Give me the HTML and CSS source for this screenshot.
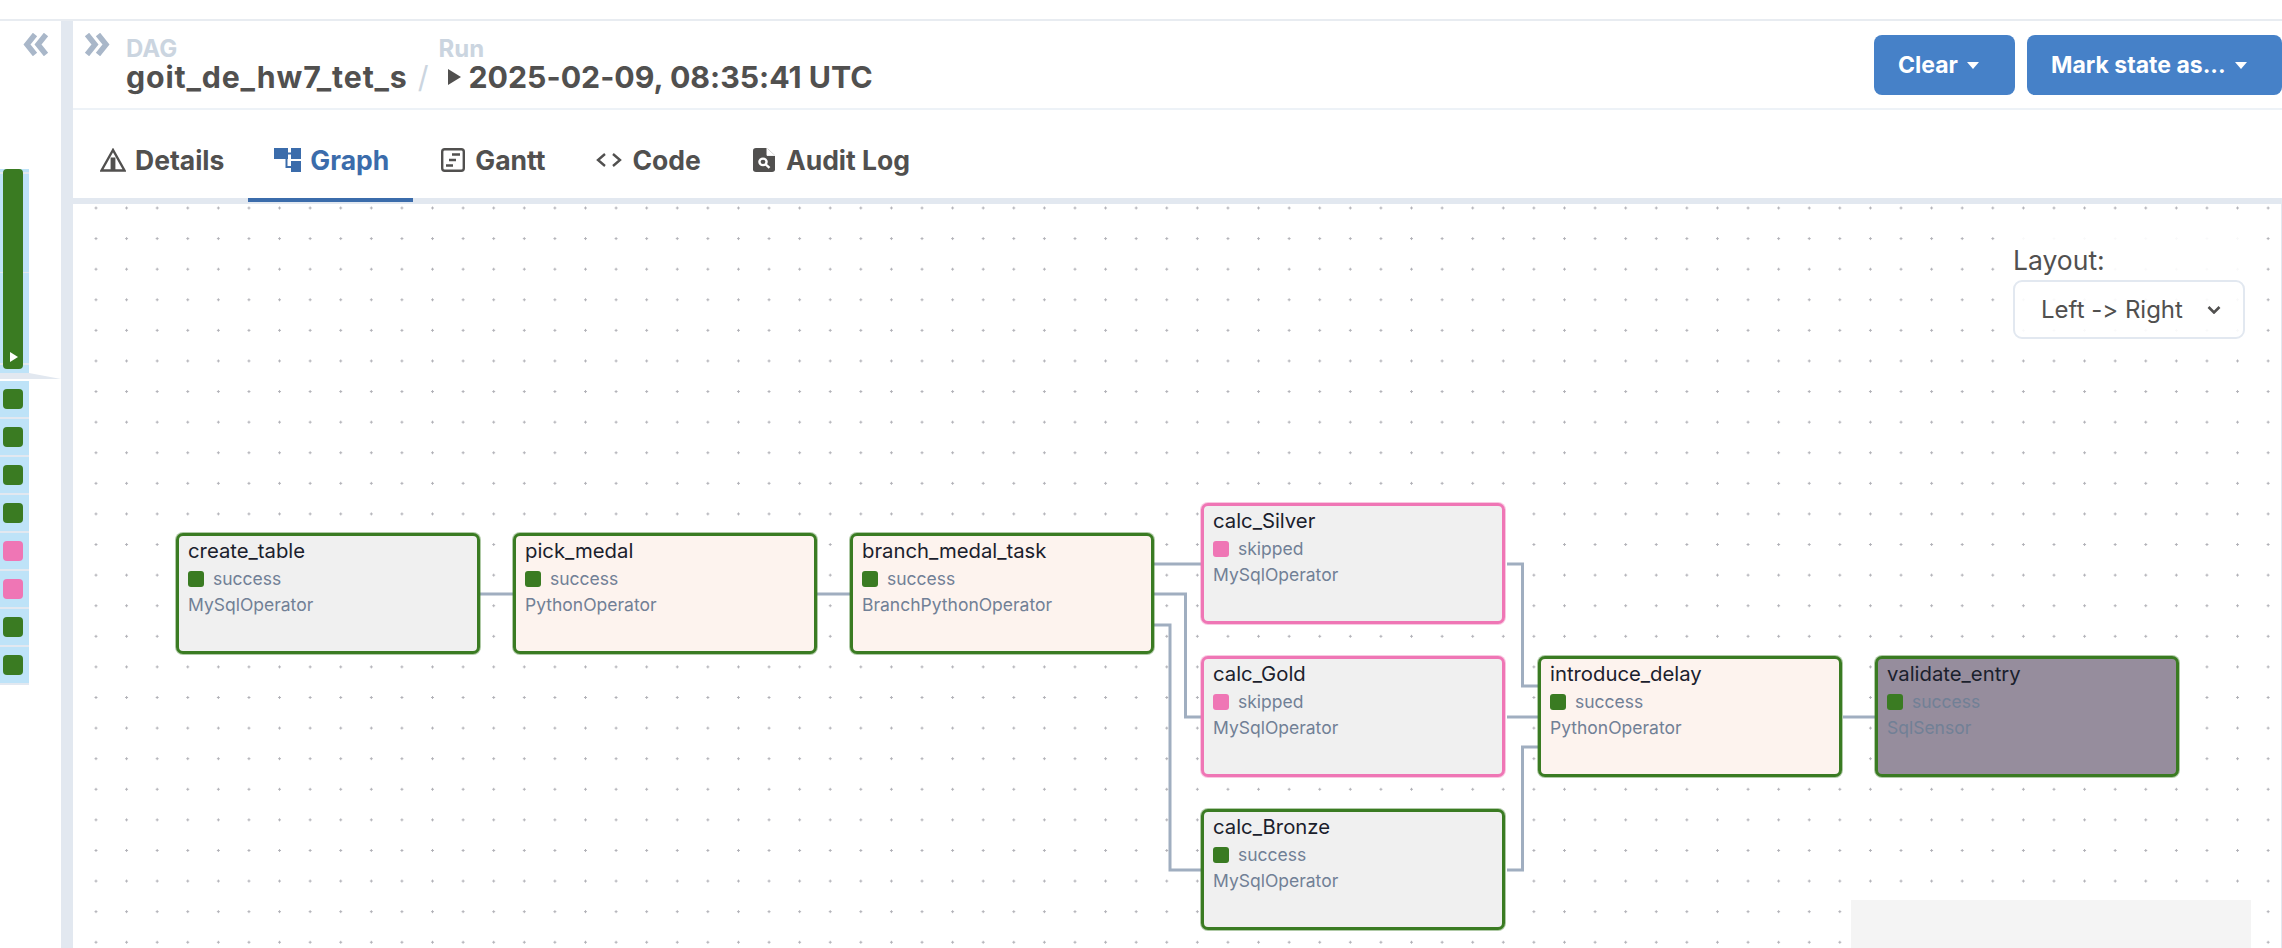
FILE: index.html
```html
<!DOCTYPE html>
<html lang="en">
<head>
    <meta charset="UTF-8">
    <title>goit_de_hw7_tet_s - Graph</title>
    <link rel="stylesheet" href="styles.css">
</head>
<body>
    <div class="topbar"></div>
    <div class="page">
        <aside class="sidebar">
            <svg class="chevrons sidebar-toggle" viewBox="0 0 26 23"><path d="M12 1.5 4 11.5 12 21.5M23 1.5 15 11.5 23 21.5"/></svg>
            <div class="run-col">
                <div class="run-bar">
                    <svg class="play" viewBox="0 0 8 10"><path d="M0 0 8 5 0 10z"/></svg>
                </div>
            </div>
            <div class="run-pointer"></div>
            <div class="cell"><span class="sq success"></span></div>
            <div class="cell"><span class="sq success"></span></div>
            <div class="cell"><span class="sq success"></span></div>
            <div class="cell"><span class="sq success"></span></div>
            <div class="cell"><span class="sq skipped"></span></div>
            <div class="cell"><span class="sq skipped"></span></div>
            <div class="cell"><span class="sq success"></span></div>
            <div class="cell"><span class="sq success"></span></div>
        </aside>
        <main class="content">
            <header class="head">
                <svg class="chevrons head-toggle" viewBox="0 0 26 23"><path d="M3 1.5 11 11.5 3 21.5M14 1.5 22 11.5 14 21.5"/></svg>
                <div class="crumb">
                    <span class="crumb-label">DAG</span>
                    <span class="crumb-value dag-name">goit_de_hw7_tet_s</span>
                </div>
                <span class="crumb-sep">/</span>
                <div class="crumb">
                    <span class="crumb-label">Run</span>
                    <span class="crumb-value"><svg class="run-icon" viewBox="0 0 13 16"><path d="M0 0 13 8 0 16z"/></svg>2025-02-09, 08:35:41 UTC</span>
                </div>
                <div class="actions">
                    <button class="btn btn-clear">Clear<i class="caret"></i></button>
                    <button class="btn btn-mark">Mark state as...<i class="caret"></i></button>
                </div>
            </header>
            <nav class="tabs">
                <a class="tab tab-details">
                    <svg class="tab-icon" viewBox="0 0 26 24"><path class="line" d="M13 2 1.5 22.5h23zM11.8 9.5v13M14.2 9.5v13"/></svg>
                    Details
                </a>
                <a class="tab tab-graph active">
                    <svg class="tab-icon" viewBox="0 0 27 24"><path class="fill" d="M0 0h14v11H0zM17 0h10v11H17zM17 13h10v11H17z"/><path class="line thin" d="M14 5.5h3M12.5 11v8h5"/></svg>
                    Graph
                </a>
                <a class="tab tab-gantt">
                    <svg class="tab-icon" viewBox="0 0 24 24"><rect class="line" x="1.2" y="1.2" width="21.6" height="21.6" rx="2.5"/><path class="line" d="M11 6.5h8M8 12h7M5 17.5h7"/></svg>
                    Gantt
                </a>
                <a class="tab tab-code">
                    <svg class="tab-icon" viewBox="0 0 26 24"><path class="line" d="M9 6 2 12l7 6M17 6l7 6-7 6"/></svg>
                    Code
                </a>
                <a class="tab tab-audit">
                    <svg class="tab-icon audit-icon" viewBox="0 0 22 26" preserveAspectRatio="none"><path class="fill" d="M3 0h11l8 8v15a3 3 0 0 1-3 3H3a3 3 0 0 1-3-3V3a3 3 0 0 1 3-3z"/><path class="cut" d="M14 0v8h8"/><circle class="lens" cx="10" cy="15" r="3.6"/><path class="lens" d="m12.8 17.8 3.7 3.7"/></svg>
                    Audit Log
                </a>
            </nav>
            <section class="canvas">
                <svg class="edges" width="2206" height="744">
                    <path d="M405 390H438"/>
                    <path d="M742 390H775"/>
                    <path d="M1079 360H1126"/>
                    <path d="M1079 390H1110.5V513H1126"/>
                    <path d="M1079 421H1095V666H1126"/>
                    <path d="M1432 360H1447.5V482H1463"/>
                    <path d="M1432 513H1463"/>
                    <path d="M1432 666H1447.5V543H1463"/>
                    <path d="M1768 513H1800"/>
                </svg>

                <div class="node sql done n-create">
                    <div class="node-title">create_table</div>
                    <div class="node-state"><span class="dot success"></span>success</div>
                    <div class="node-op">MySqlOperator</div>
                </div>
                <div class="node py done n-pick">
                    <div class="node-title">pick_medal</div>
                    <div class="node-state"><span class="dot success"></span>success</div>
                    <div class="node-op">PythonOperator</div>
                </div>
                <div class="node py done n-branch">
                    <div class="node-title">branch_medal_task</div>
                    <div class="node-state"><span class="dot success"></span>success</div>
                    <div class="node-op">BranchPythonOperator</div>
                </div>
                <div class="node sql skip n-silver">
                    <div class="node-title">calc_Silver</div>
                    <div class="node-state"><span class="dot skipped"></span>skipped</div>
                    <div class="node-op">MySqlOperator</div>
                </div>
                <div class="node sql skip n-gold">
                    <div class="node-title">calc_Gold</div>
                    <div class="node-state"><span class="dot skipped"></span>skipped</div>
                    <div class="node-op">MySqlOperator</div>
                </div>
                <div class="node sql done n-bronze">
                    <div class="node-title">calc_Bronze</div>
                    <div class="node-state"><span class="dot success"></span>success</div>
                    <div class="node-op">MySqlOperator</div>
                </div>
                <div class="node py done n-delay">
                    <div class="node-title">introduce_delay</div>
                    <div class="node-state"><span class="dot success"></span>success</div>
                    <div class="node-op">PythonOperator</div>
                </div>
                <div class="node sensor done n-validate">
                    <div class="node-title">validate_entry</div>
                    <div class="node-state"><span class="dot success"></span>success</div>
                    <div class="node-op">SqlSensor</div>
                </div>

                <div class="layout-panel">
                    <label class="layout-label">Layout:</label>
                    <div class="layout-select">
                        Left -&gt; Right
                        <svg class="select-arrow" viewBox="0 0 14 8"><path d="M1.5 1 7 6.5 12.5 1"/></svg>
                    </div>
                </div>
                <div class="minimap"></div>
            </section>
        </main>
    </div>
</body>
</html>
```

FILE: styles.css
```css
* {
    box-sizing: border-box;
}
html, body {
    height: 100%;
}
body {
    margin: 0;
    display: flex;
    flex-direction: column;
    overflow: hidden;
    background: #fff;
    color: #51504f;
    font-family: Inter, "Liberation Sans", sans-serif;
    font-variant-ligatures: none;
    font-feature-settings: "calt" 0;
}
.topbar {
    height: 21px;
    flex: none;
    border-bottom: 2px solid #e8ecf1;
}
.page {
    flex: 1;
    display: flex;
    min-height: 0;
}

/* left grid */
.sidebar {
    width: 61px;
    flex: none;
}
.chevrons {
    display: block;
    width: 26px;
    height: 23px;
    fill: none;
    stroke: #a9b7c9;
    stroke-width: 5.5;
}
.sidebar-toggle {
    margin: 12px 0 113px 23px;
}
.run-col {
    width: 29px;
    height: 204px;
    padding-left: 3px;
    background:
        linear-gradient(#e2e8f0, #e2e8f0) 0 3px / 100% 2px no-repeat,
        linear-gradient(#e2e8f0, #e2e8f0) 0 103px / 100% 1px no-repeat,
        linear-gradient(#e2e8f0, #e2e8f0) 0 194px / 100% 2px no-repeat,
        #bee3f8;
}
.run-bar {
    width: 20px;
    height: 200px;
    background: #3a7b22;
    border-radius: 4px;
    display: flex;
    align-items: flex-end;
    padding: 0 0 7px 7px;
}
.play {
    width: 8px;
    height: 10px;
    fill: #fff;
}
.run-pointer {
    width: 61px;
    height: 6px;
    margin-bottom: 2px;
    background: #e2e8f0;
    clip-path: polygon(0 0, 29px 0, 100% 100%, 0 100%);
}
.cell {
    width: 29px;
    height: 38px;
    padding: 8px 0 0 3px;
    background: #bee3f8;
    border-bottom: 2px solid #e2e8f0;
}
.sq {
    display: block;
    width: 20px;
    height: 20px;
    border-radius: 4px;
}
.success {
    background: #3a7b22;
}
.skipped {
    background: #ef76b5;
}

/* main column */
.content {
    flex: 1;
    min-width: 0;
    display: flex;
    flex-direction: column;
    border-left: 12px solid #e2e8f0;
}
.head {
    height: 89px;
    flex: none;
    display: flex;
    align-items: flex-start;
    border-bottom: 2px solid #edf2f7;
}
.head-toggle {
    margin: 12px 16px 0 11px;
    flex: none;
}
.crumb {
    display: flex;
    flex-direction: column;
    margin-top: 15px;
}
.crumb-label {
    font-size: 24px;
    line-height: 26px;
    font-weight: 700;
    color: #cbd5e0;
}
.crumb-value {
    display: flex;
    align-items: center;
    font-size: 30.3px;
    line-height: 36px;
    font-weight: 700;
    white-space: nowrap;
    margin-top: -3px;
}
.dag-name {
    letter-spacing: 0.85px;
}
.crumb-sep {
    margin: 38px 10px 0 10px;
    font-size: 30px;
    line-height: 36px;
    color: #cbd5e0;
}
.run-icon {
    width: 13px;
    height: 16px;
    margin: 0 8px 0 9px;
    fill: #51504f;
}
.actions {
    margin-left: auto;
    display: flex;
    gap: 12px;
    padding-top: 14px;
}
.btn {
    height: 60px;
    padding: 0 24px;
    border: 0;
    border-radius: 8px;
    background: #4681c8;
    color: #fff;
    font: 700 23px Inter, "Liberation Sans", sans-serif;
    display: flex;
    align-items: center;
}
.btn-clear {
    width: 141px;
}
.btn-mark {
    width: 255px;
}
.caret {
    margin-left: 9px;
    border-top: 7px solid #fff;
    border-left: 6.5px solid transparent;
    border-right: 6.5px solid transparent;
}

/* tabs */
.tabs {
    height: 94px;
    flex: none;
    display: flex;
    border-bottom: 6px solid #e2e8f0;
}
.tab {
    height: 92px;
    margin-bottom: -4px;
    padding: 12px 26px 0;
    display: flex;
    align-items: center;
    gap: 9px;
    border-bottom: 4px solid transparent;
    font-size: 26.5px;
    font-weight: 700;
}
.tab-details {
    padding-left: 27px;
    padding-right: 24px;
}
.tab-graph {
    padding-right: 24px;
}
.tab-gantt {
    padding-left: 28px;
    padding-right: 24.5px;
    gap: 10px;
}
.tab-code {
    gap: 10.5px;
}
.tab-audit {
    padding-left: 26px;
    gap: 11px;
}
.tab.active {
    color: #3b6cab;
    border-bottom-color: #3b6cab;
}
.tab-icon {
    height: 24px;
    width: auto;
    flex: none;
}
.audit-icon {
    width: 22px;
}
.tab-icon .line {
    fill: none;
    stroke: currentColor;
    stroke-width: 2.4;
}
.tab-icon .thin {
    stroke-width: 2;
}
.tab-icon .fill {
    fill: currentColor;
    stroke: none;
}
.tab-icon .cut {
    fill: #fff;
    stroke: #fff;
    stroke-width: 1;
}
.tab-icon .lens {
    fill: none;
    stroke: #fff;
    stroke-width: 2.4;
}

/* graph */
.canvas {
    flex: 1;
    position: relative;
    margin-left: 2px;
    overflow: hidden;
    border-right: 1px solid #e2e8f0;
    background-image: radial-gradient(circle, #b1b1b7 1px, transparent 1.2px);
    background-size: 30.6px 30.6px;
    background-position: 5.7px -11.3px;
}
.edges {
    position: absolute;
    left: 0;
    top: 0;
}
.edges path {
    fill: none;
    stroke: #a0aec0;
    stroke-width: 3;
}
.node {
    position: absolute;
    width: 304px;
    height: 121px;
    padding: 1px 9px;
    border: 3px solid;
    border-radius: 7px;
}
.node.done {
    border-color: #3a7b22;
    box-shadow: 0 0 0 1px rgba(58, 123, 34, 0.4);
}
.node.skip {
    border-color: #ef76b5;
    box-shadow: 0 0 0 1px rgba(239, 118, 181, 0.4);
}
.node.sql {
    background: #f0f0f0;
}
.node.py {
    background: #fdf3ee;
}
.node.sensor {
    background: #968d9d;
}
.node-title {
    font-size: 20.3px;
    line-height: 27px;
    color: #1a202c;
}
.node-state,
.node-op {
    font-size: 17.5px;
    line-height: 26px;
    color: #718096;
}
.node-state {
    display: flex;
    align-items: center;
    margin-top: 2px;
}
.dot {
    width: 16px;
    height: 16px;
    margin-right: 9px;
    border-radius: 3px;
}
.n-create { left: 101px; top: 329px; }
.n-pick { left: 438px; top: 329px; }
.n-branch { left: 775px; top: 329px; }
.n-silver { left: 1126px; top: 299px; }
.n-gold { left: 1126px; top: 452px; }
.n-bronze { left: 1126px; top: 605px; }
.n-delay { left: 1463px; top: 452px; }
.n-validate { left: 1800px; top: 452px; }

.layout-panel {
    position: absolute;
    left: 1938px;
    top: 26px;
    width: 232px;
    height: 109px;
    display: flex;
    flex-direction: column;
    justify-content: flex-end;
    background: rgba(255, 255, 255, 0.92);
}
.layout-label {
    font-size: 26.5px;
    line-height: 36px;
    margin-bottom: 2px;
}
.layout-select {
    height: 59px;
    padding: 0 22px 0 26px;
    border: 2px solid #e2e8f0;
    border-radius: 9px;
    display: flex;
    align-items: center;
    justify-content: space-between;
    font-size: 24px;
}
.select-arrow {
    width: 14px;
    height: 8px;
    fill: none;
    stroke: #51504f;
    stroke-width: 2.6;
}
.minimap {
    position: absolute;
    left: 1776px;
    top: 696px;
    width: 400px;
    bottom: 0;
    background: #f4f4f4;
}
```
